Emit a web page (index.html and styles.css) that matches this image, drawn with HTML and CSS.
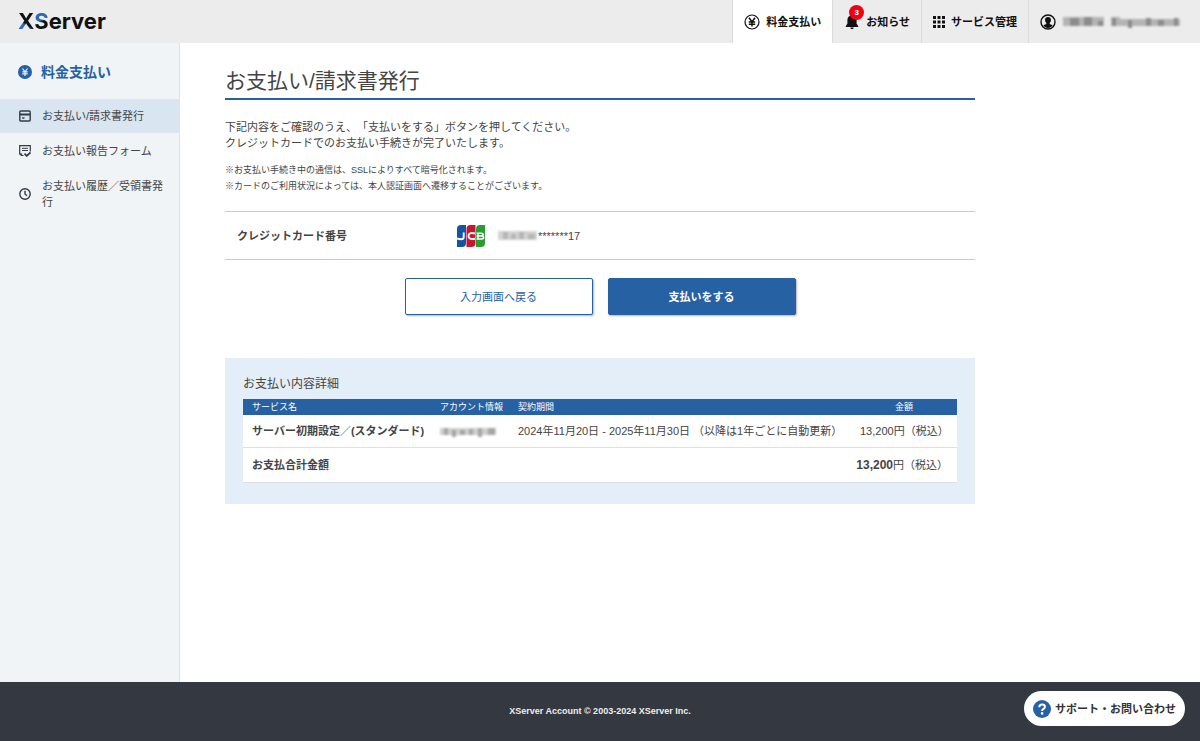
FILE: index.html
```html
<!DOCTYPE html>
<html lang="ja">
<head>
<meta charset="utf-8">
<meta name="viewport" content="width=device-width, initial-scale=1">
<title>お支払い/請求書発行</title>
<link rel="stylesheet" href="styles.css">
</head>
<body>
<header class="header">
  <a class="logo" href="#"><span class="logo-x">X</span><span class="logo-s">S</span>erver</a>
  <nav class="topnav">
    <a class="topnav-item is-active" href="#">
      <svg class="icon-md" viewBox="0 0 16 16" fill="none" stroke="#111"><circle cx="8" cy="8" r="7" stroke-width="1.2"/><path d="M5 3.8 8 8l3-4.2M8 8v4.6M4.8 8h6.4M4.8 10.2h6.4" stroke-width="1.5"/></svg>
      <span>料金支払い</span>
    </a>
    <a class="topnav-item" href="#">
      <span class="bell">
        <svg class="icon-md" viewBox="0 0 16 16" fill="#111"><path d="M8 1.5c-3 0-4.6 2-4.6 4.6v3.6L1.8 12v1h12.4v-1l-1.6-2.3V6.100C12.600 3.500 11 1.500 8 1.500zM6.300 13.600a1.700 1.700 0 0 0 3.400 0z"/></svg>
        <span class="badge">3</span>
      </span>
      <span>お知らせ</span>
    </a>
    <a class="topnav-item" href="#">
      <svg class="icon-grid" viewBox="0 0 12 12" fill="#111"><path d="M0 0h3v3H0zM4.500 0h3v3h-3zM9 0h3v3H9zM0 4.500h3v3H0zM4.500 4.500h3v3h-3zM9 4.500h3v3H9zM0 9h3v3H0zM4.500 9h3v3h-3zM9 9h3v3H9z"/></svg>
      <span>サービス管理</span>
    </a>
    <button class="topnav-item" type="button" aria-label="アカウント">
      <svg class="icon-md" viewBox="0 0 16 16"><circle cx="8" cy="8" r="7" fill="none" stroke="#111" stroke-width="1.400"/><path d="M8 3c-1.900 0-3 1.300-3 3.100 0 1.200.5 2.200 1.300 2.800v1L3.400 11.300C4.400 13 6 14 8 14s3.600-1 4.600-2.700L9.700 9.900v-1C10.500 8.300 11 7.300 11 6.100 11 4.300 9.900 3 8 3z" fill="#111"/></svg>
      <svg class="mask mask-user" viewBox="0 0 120 12" aria-hidden="true"><path d="M1 1h41v9H1zM49 1h9v9h-9zM58 3h60v7H58z" fill="#b4b4b4"/><path d="M8 2h9v8H8zM22 1h8v9h-8zM36 5h5v5h-5zM50 2h4v8h-4zM66 4h4v8h-4zM84 2h5v8h-5zM96 4h6v6h-6zM112 2h4v8h-4z" fill="#8c8c8c"/></svg>
    </button>
  </nav>
</header>
<div class="layout">
  <aside class="sidebar">
    <h2 class="side-title">
      <svg class="icon-side-title" viewBox="0 0 14 14"><circle cx="7" cy="7" r="7" fill="#2561a3"/><path d="M4.500 3.500 7 6.800l2.500-3.300M7 6.800V11M4.300 6.900h5.400M4.300 8.900h5.400" fill="none" stroke="#e8f1f8" stroke-width="1.200"/></svg>
      <span>料金支払い</span>
    </h2>
    <nav class="side-nav">
      <a class="side-item is-current" href="#">
        <svg class="icon-side" viewBox="0 0 12 12" fill="none" stroke="#333b47" stroke-width="1.400"><rect x=".8" y="1" width="10.400" height="10" rx="1"/><path d="M1 4.500h10" stroke-width="2"/><path d="M3 8h2.500"/></svg>
        <span>お支払い/請求書発行</span>
      </a>
      <a class="side-item" href="#">
        <svg class="icon-side" viewBox="0 0 12 12" fill="none" stroke="#333b47" stroke-width="1.200"><path d="M4.500 10.500H2.500L.7 9V.7h10.600V6.500"/><path d="M.8 8.800h1.900v1.700M3 3.300h6M3 5.500h6" stroke-width="1"/><path d="m5.500 8.700 2.200 2.200L11.500 7.500" stroke-width="1.800"/></svg>
        <span>お支払い報告フォーム</span>
      </a>
      <a class="side-item" href="#">
        <svg class="icon-side" viewBox="0 0 12 12" fill="none" stroke="#333b47" stroke-width="1.400"><circle cx="6" cy="6" r="5.200"/><path d="M6 2.800V6l2 1.800"/></svg>
        <span>お支払い履歴／受領書発行</span>
      </a>
    </nav>
  </aside>
  <main class="main">
    <div class="content">
      <h1 class="page-title">お支払い/請求書発行</h1>
      <p class="lead">下記内容をご確認のうえ、「支払いをする」ボタンを押してください。<br>クレジットカードでのお支払い手続きが完了いたします。</p>
      <p class="notes">※お支払い手続き中の通信は、SSLによりすべて暗号化されます。<br>※カードのご利用状況によっては、本人認証画面へ遷移することがございます。</p>
      <dl class="card-row">
        <dt>クレジットカード番号</dt>
        <dd>
          <svg class="jcb" viewBox="0 0 28 22" role="img" aria-label="JCB">
            <path d="M4 0h5v18q0 4-4 4H0V4q0-4 4-4z" fill="#1653a4"/>
            <path d="M13.500 0h5v18q0 4-4 4h-5V4q0-4 4-4z" fill="#c9152f"/>
            <path d="M23 0h5v18q0 4-4 4h-5V4q0-4 4-4z" fill="#2b9b35"/>
            <g fill="none" stroke="#fff"><path d="M6.700 7.500v4.800q0 2-2.700 2Q2 14.300 0 13.500M18 8.500q-6.500-1.600-6.500 2.500t6.500 2.700" stroke-width="1.900"/><path d="M19.500 8.300H24q2.200 0 2.200 1.300T24 11h-4.500 4.800q2.300 0 2.300 1.500T24.300 14h-4.800M21 8v6" stroke-width="1.500"/></g>
          </svg>
          <svg class="mask mask-card" viewBox="0 0 41 12" aria-hidden="true"><path d="M1 1h39v9H1z" fill="#d3d3d3"/><path d="M6 2h5v7H6zM14 4h5v5h-5zM22 2h5v7h-5zM31 4h7v5h-7z" fill="#b5b5b5"/></svg><span>*******17</span>
        </dd>
      </dl>
      <div class="actions">
        <button class="btn btn-back" type="button">入力画面へ戻る</button>
        <button class="btn btn-pay" type="submit">支払いをする</button>
      </div>
      <section class="details">
        <h2 class="details-title">お支払い内容詳細</h2>
        <table class="bill">
          <colgroup><col class="col-service"><col class="col-account"><col><col class="col-price"></colgroup>
          <thead><tr><th scope="col">サービス名</th><th scope="col">アカウント情報</th><th scope="col">契約期間</th><th class="price-head" scope="col">金額</th></tr></thead>
          <tbody>
            <tr><th scope="row">サーバー初期設定／(スタンダード)</th><td><svg class="mask mask-account" viewBox="0 0 56 12" aria-hidden="true"><path d="M0 3h56v7H0z" fill="#cfcfcf"/><path d="M4 3h4v7H4zM12 5h4v7h-4zM20 5h5v5h-5zM29 4h4v6h-4zM38 3h4v9h-4zM48 3h7v7h-7z" fill="#a5a5a5"/></svg></td><td>2024年11月20日 - 2025年11月30日 （以降は1年ごとに自動更新）</td><td class="price">13,200円（税込）</td></tr>
            <tr class="total"><th scope="row">お支払合計金額</th><td class="price" colspan="3"><strong>13,200</strong>円（税込）</td></tr>
          </tbody>
        </table>
      </section>
    </div>
  </main>
</div>
<footer class="footer">
  <small>XServer Account © 2003-2024 XServer Inc.</small>
</footer>
<button class="support" type="button">
  <svg class="icon-support" viewBox="0 0 18 18"><circle cx="9" cy="9" r="9" fill="#2561a3"/><path d="M6.300 7.200q0-2.700 2.800-2.700t2.800 2.300q0 1.300-1.400 2.100T9.100 11" fill="none" stroke="#fff" stroke-width="2"/><circle cx="9.100" cy="13.400" r="1.300" fill="#fff"/></svg>
  <span>サポート・お問い合わせ</span>
</button>
</body>
</html>
```
FILE: styles.css
```css
* { box-sizing: border-box; }
body {
  margin: 0;
  min-height: 100vh;
  display: flex;
  flex-direction: column;
  font-family: "Liberation Sans", "Noto Sans CJK JP", sans-serif;
  font-size: 11px;
  line-height: 16px;
  color: #444;
  background: #fff;
  text-spacing-trim: space-all;
}
h1, h2, p, dl, dd { margin: 0; }
a { color: inherit; text-decoration: none; }
button { font: inherit; cursor: pointer; }
svg { flex: none; display: block; }
.icon-md { width: 16px; height: 16px; }
.icon-grid { width: 12px; height: 12px; }
.icon-side { width: 12px; height: 12px; }
.icon-side-title { width: 14px; height: 14px; }
.icon-support { width: 18px; height: 18px; }
.mask { height: 12px; filter: blur(1px); }
.mask-user { width: 120px; }
.mask-card { width: 41px; }
.mask-account { width: 56px; }

.header {
  display: flex;
  justify-content: space-between;
  height: 43px;
  background: #ececec;
}
.logo {
  display: flex;
  align-items: center;
  padding-left: 18px;
  font: 700 22px/43px Inter, sans-serif;
  color: #111;
}
.logo-x, .logo-s { background-clip: text; color: transparent; }
.logo-x { background-image: linear-gradient(35deg, #2f69b1 42%, #111 46%); }
.logo-s { background-image: linear-gradient(145deg, #2f69b1 46%, #111 52%); }
.topnav { display: flex; }
.topnav-item {
  display: flex;
  align-items: center;
  gap: 6px;
  padding: 0 11px;
  border: 0;
  border-left: 1px solid #dcdcdc;
  background: none;
  color: #111;
  font-weight: 700;
}
.topnav-item:last-child { padding-right: 18px; }
.topnav-item.is-active { background: #fff; }
.bell { position: relative; }
.badge {
  position: absolute;
  left: 5px;
  top: -9px;
  width: 15px;
  height: 15px;
  border-radius: 50%;
  background: #f00012;
  color: #fff;
  font-size: 8px;
  line-height: 15px;
  text-align: center;
}

.layout { flex: 1; display: flex; }
.sidebar {
  width: 180px;
  flex: none;
  background: #f0f4f7;
  border-right: 1px solid #dde3e9;
}
.side-title {
  display: flex;
  align-items: center;
  gap: 9px;
  height: 56px;
  padding: 2px 18px 0;
  font-size: 14px;
  color: #2561a3;
}
.side-nav { display: grid; gap: 1px; }
.side-item {
  display: flex;
  align-items: center;
  gap: 11px;
  padding: 9px 13px 9px 19px;
  color: #444;
}
.side-item.is-current { background: #d9e6f2; }

.main { flex: 1; min-width: 0; padding: 23px 45px 40px; }
.content { max-width: 750px; }
.page-title {
  padding-bottom: 2px;
  border-bottom: 2px solid #2561a3;
  font-size: 21px;
  font-weight: 400;
  line-height: 30px;
}
.lead { margin-top: 19px; }
.notes { margin-top: 11px; font-size: 9px; }
.card-row {
  display: flex;
  align-items: center;
  min-height: 49px;
  margin-top: 17px;
  padding: 0 12px;
  border: solid #c4cad2;
  border-width: 1px 0;
}
.card-row dt { width: 220px; font-weight: 700; }
.card-row dd { display: flex; align-items: center; }
.jcb { width: 28px; height: 22px; margin-right: 12px; }
.actions { display: flex; justify-content: center; gap: 15px; margin-top: 18px; }
.btn {
  width: 188px;
  height: 37px;
  border: 1px solid #2561a3;
  border-radius: 2px;
  box-shadow: 1px 1px 2px rgba(0, 0, 0, .3);
}
.btn-back { background: #fff; color: #2561a3; }
.btn-pay { background: #2561a3; color: #fff; font-weight: 700; }
.details { margin-top: 43px; padding: 17px 18px 21px; background: #e4eef8; }
.details-title { margin-bottom: 6px; font-size: 12px; font-weight: 400; line-height: 18px; }
.bill {
  width: 100%;
  table-layout: fixed;
  border-collapse: collapse;
  background: #fff;
}
.col-service { width: 188px; }
.col-account { width: 78px; }
.col-price { width: 106px; }
.bill th, .bill td { padding: 0 9px; text-align: left; white-space: nowrap; }
.bill thead th {
  background: #2561a3;
  color: #fff;
  font-size: 9px;
  font-weight: 400;
}
.bill thead .price-head { text-align: center; }
.bill tbody tr { height: 32px; border-bottom: 1px solid #dde1e5; }
.bill tbody .total { height: 35px; }
.bill .price { text-align: right; }
.price strong { font-size: 12px; }

.footer {
  height: 59px;
  padding-bottom: 2px;
  display: flex;
  align-items: center;
  justify-content: center;
  background: #343840;
  color: #eee;
}
.footer small { font-size: 9px; font-weight: 700; }
.support {
  position: fixed;
  right: 15px;
  bottom: 15px;
  display: flex;
  align-items: center;
  gap: 4px;
  height: 35px;
  padding: 0 9px;
  border: 0;
  border-radius: 18px;
  background: #fff;
  color: #333;
  font-weight: 700;
}
```
